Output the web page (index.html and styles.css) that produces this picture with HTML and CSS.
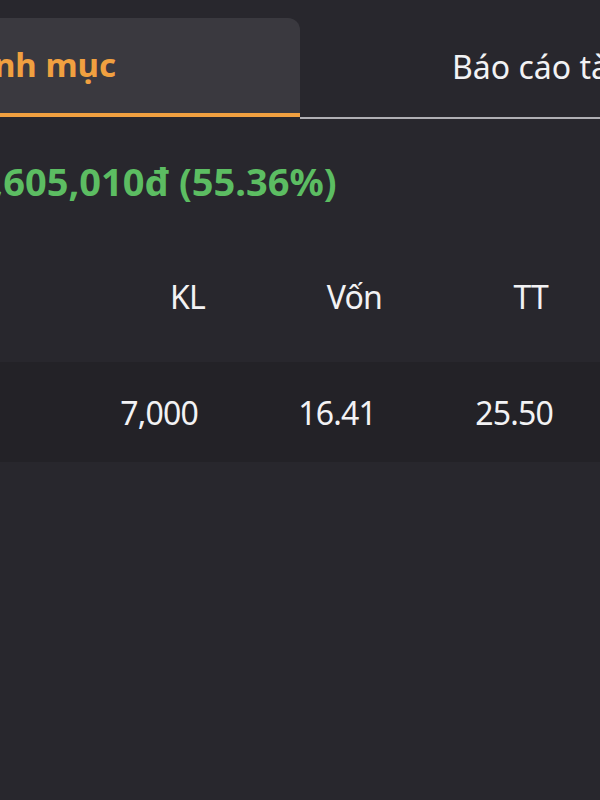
FILE: index.html
```html
<!DOCTYPE html>
<html lang="vi">
<head>
<meta charset="utf-8">
<link rel="stylesheet" href="styles.css">
</head>
<body>
<div class="screen">
  <div class="tabs">
    <div class="tab active"><span class="tab-label">Danh mục</span></div>
    <div class="tab"><span class="tab-label">Báo cáo tài chính</span></div>
  </div>
  <div class="summary"><span class="gain">+1,605,010đ (55.36%)</span></div>
  <div class="table">
    <div class="row head">
      <span class="cell">KL</span>
      <span class="cell">Vốn</span>
      <span class="cell">TT</span>
    </div>
    <div class="row data">
      <span class="cell">7,000</span>
      <span class="cell">16.41</span>
      <span class="cell">25.50</span>
    </div>
  </div>
</div>
</body>
</html>
```

FILE: styles.css
```css
html, body {
  margin: 0;
  padding: 0;
  background: #28272d;
}
body {
  width: 600px;
  height: 800px;
  overflow: hidden;
  font-family: "Noto Sans", "Open Sans", sans-serif;
  color: #f2f2f4;
}
.screen {
  padding-top: 18px;
}
.tabs {
  display: flex;
  height: 101px;
  box-sizing: border-box;
}
.tab {
  flex: 0 0 300px;
  box-sizing: border-box;
  border-bottom: 2px solid #b0afb4;
  overflow: hidden;
  white-space: nowrap;
  display: flex;
  align-items: center;
}
.tab.active {
  background: #3a393f;
  border-radius: 0 12px 0 0;
  border-bottom: 4px solid #f0a040;
  height: 99px;
}
.tab.active .tab-label {
  color: #f0a040;
  font-weight: 700;
  font-size: 33px;
  margin-left: -50px;
  margin-top: -3px;
}
.tab .tab-label {
  font-size: 32px;
  margin-left: 152px;
  margin-top: -3px;
}
.summary {
  white-space: nowrap;
  overflow: hidden;
  height: 122px;
  display: flex;
  align-items: center;
}
.gain {
  color: #5cbd62;
  font-weight: 700;
  font-size: 38px;
  margin-left: -51px;
  margin-top: 2px;
}
.row {
  display: grid;
  align-items: center;
  white-space: nowrap;
}
.cell {
  text-align: right;
  letter-spacing: -0.8px;
}
.head {
  height: 131px;
  font-size: 32px;
  grid-template-columns: 205px 177px 166px;
  margin-top: -10px;
}
.data {
  height: 100px;
  background: #232227;
  font-size: 32px;
  grid-template-columns: 198px 178px 177px;
}
```
